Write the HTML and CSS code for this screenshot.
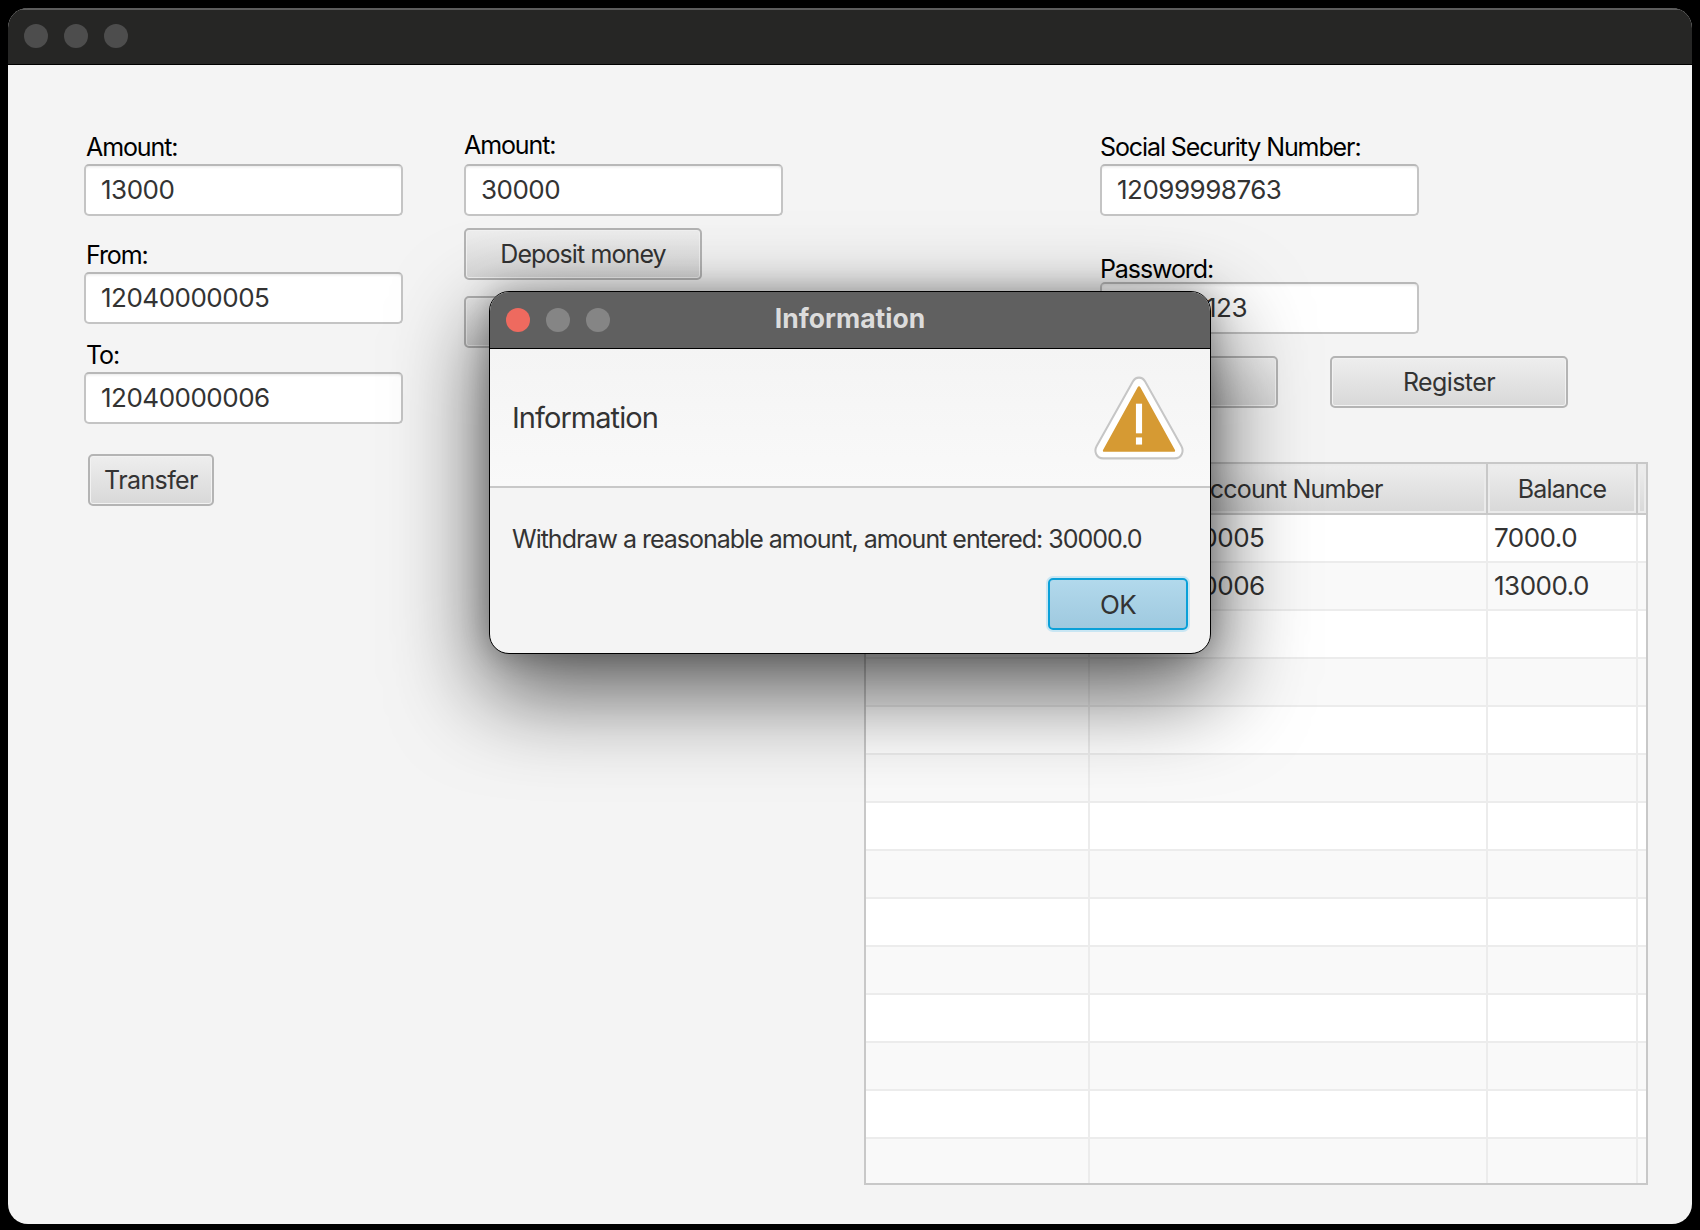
FILE: index.html
```html
<!DOCTYPE html>
<html lang="en">
<head>
    <meta charset="UTF-8">
    <meta name="viewport" content="width=device-width, initial-scale=1.0">
    <title>Bank</title>
    <link rel="stylesheet" href="styles.css">
</head>
<body>

    <div class="window">
        <div class="titlebar">
            <span class="dot"></span>
            <span class="dot"></span>
            <span class="dot"></span>
        </div>

        <div class="content">
            <div class="col col-transfer">
                <div class="label">Amount:</div>
                <div class="field">13000</div>
                <div class="label label-from">From:</div>
                <div class="field">12040000005</div>
                <div class="label label-to">To:</div>
                <div class="field">12040000006</div>
                <button class="button button-transfer">Transfer</button>
            </div>

            <div class="col col-money">
                <div class="label label-raised">Amount:</div>
                <div class="field">30000</div>
                <button class="button button-deposit">Deposit money</button>
                <button class="button button-withdraw"></button>
            </div>

            <div class="col col-account">
                <div class="account-form">
                    <div class="label">Social Security Number:</div>
                    <div class="field">12099998763</div>
                    <div class="label label-password">Password:</div>
                    <div class="field field-password">123</div>
                    <div class="account-buttons">
                        <button class="button button-login"></button>
                        <button class="button button-register">Register</button>
                    </div>
                </div>

                <div class="table-wrap">
                    <table>
                        <thead>
                            <tr>
                                <th class="c-name"></th>
                                <th class="c-number">Account Number</th>
                                <th class="c-balance">Balance</th>
                                <th class="c-filler"></th>
                            </tr>
                        </thead>
                        <tbody id="accountRows">
                            <tr><td></td><td>12040000005</td><td>7000.0</td><td></td></tr>
                            <tr><td></td><td>12040000006</td><td>13000.0</td><td></td></tr>
                            <tr><td></td><td></td><td></td><td></td></tr>
                            <tr><td></td><td></td><td></td><td></td></tr>
                            <tr><td></td><td></td><td></td><td></td></tr>
                            <tr><td></td><td></td><td></td><td></td></tr>
                            <tr><td></td><td></td><td></td><td></td></tr>
                            <tr><td></td><td></td><td></td><td></td></tr>
                            <tr><td></td><td></td><td></td><td></td></tr>
                            <tr><td></td><td></td><td></td><td></td></tr>
                            <tr><td></td><td></td><td></td><td></td></tr>
                            <tr><td></td><td></td><td></td><td></td></tr>
                            <tr><td></td><td></td><td></td><td></td></tr>
                            <tr><td></td><td></td><td></td><td></td></tr>
                        </tbody>
                    </table>
                </div>
            </div>
        </div>
    </div>

    <div class="dialog">
        <div class="dialog-titlebar">
            <span class="dot dot-close"></span>
            <span class="dot"></span>
            <span class="dot"></span>
            <span class="dialog-title">Information</span>
        </div>
        <div class="dialog-header">
            <span class="dialog-heading">Information</span>
            <svg class="warning-icon" width="92" height="86" viewBox="0 0 90 84">
                <path d="M45 2.5c2.6 0 4.6 1.4 6 3.8l35.4 63c3 5.400 0.200 12.200-6.400 12.200H10c-6.600 0-9.400-6.800-6.400-12.200L39 6.300c1.400-2.400 3.400-3.800 6-3.800z" fill="#fff" stroke="#c6c6c6" stroke-width="2"/>
                <path d="M45 11c.6 0 1 .3 1.300 .9l33.900 61.300c.4 .9 0 1.800-1 1.800H10.800c-1 0-1.400-.9-1-1.800l33.900-61.300c.3-.6 .7-.9 1.300-.9z" fill="#d69a33"/>
                <rect x="42" y="28" width="6" height="29" fill="#fff"/>
                <rect x="42" y="61" width="6" height="7" fill="#fff"/>
            </svg>
        </div>
        <div class="dialog-body">
            <p class="dialog-message">Withdraw a reasonable amount, amount entered: 30000.0</p>
            <div class="dialog-actions">
                <button class="button button-ok">OK</button>
            </div>
        </div>
    </div>

</body>
</html>
```

FILE: styles.css
```css
* {
    box-sizing: border-box;
}
body {
    margin: 0;
    width: 1700px;
    height: 1230px;
    background-color: #000;
    font-family: Inter, "Noto Sans", sans-serif;
    font-size: 25px;
    letter-spacing: -0.6px;
    color: #333;
    overflow: hidden;
}
.window {
    position: absolute;
    left: 8px;
    top: 8px;
    width: 1684px;
    height: 1216px;
    background-color: #f4f4f4;
    border-radius: 20px;
    overflow: hidden;
}
.titlebar {
    height: 57px;
    padding: 0 0 2px 16px;
    display: flex;
    align-items: center;
    gap: 16px;
    background-color: #262625;
    border-top: 2px solid #5c5c5c;
    border-bottom: 1px solid #000;
}
.dot {
    width: 24px;
    height: 24px;
    border-radius: 50%;
    background-color: #4d4d4d;
}
.content {
    display: flex;
    padding: 67px 0 0 76px;
}
.col {
    display: flex;
    flex-direction: column;
    align-items: flex-start;
}
.col-transfer {
    width: 380px;
}
.col-money {
    width: 400px;
}
.col-account {
    width: 784px;
}
.label {
    height: 30px;
    margin-bottom: 2px;
    line-height: 30px;
    color: #000;
    white-space: nowrap;
    letter-spacing: -1.1px;
}
.col-transfer .label {
    padding-left: 2px;
}
.label-raised {
    position: relative;
    top: -2px;
}
.label-from {
    margin-top: 24px;
}
.label-to {
    margin-top: 16px;
}
.label-password {
    margin-top: 38px;
    margin-bottom: -2px;
}
.field {
    width: 319px;
    height: 52px;
    padding-left: 15px;
    line-height: 48px;
    background-color: #fff;
    border: 2px solid #c4c4c4;
    border-top-color: #b8b8b8;
    border-radius: 5px;
    box-shadow: inset 0 3px 3px -2px #e8e8e8;
    font-size: 26px;
    letter-spacing: -0.5px;
}
.field-password {
    padding-left: 104px;
}
.button {
    display: block;
    height: 52px;
    padding: 0;
    background: linear-gradient(#eeeeee, #d8d8d8);
    border: 2px solid #b4b4b4;
    border-radius: 5px;
    box-shadow: inset 0 0 0 1px #f2f2f2;
    font-family: inherit;
    font-size: 25px;
    letter-spacing: -0.6px;
    color: #333;
}
.button-transfer {
    width: 126px;
    margin: 30px 0 0 4px;
}
.button-deposit,
.button-withdraw {
    width: 238px;
}
.button-deposit {
    margin-top: 12px;
    letter-spacing: -0.9px;
}
.button-withdraw {
    margin-top: 16px;
}
.account-form {
    padding-left: 236px;
    height: 330px;
}
.account-buttons {
    display: flex;
    gap: 52px;
    margin-top: 22px;
}
.button-login {
    width: 178px;
}
.button-register {
    width: 238px;
}
.table-wrap {
    width: 784px;
    height: 723px;
    background-color: #fff;
    border: 2px solid #c8c8c8;
    overflow: hidden;
}
table {
    width: 780px;
    table-layout: fixed;
    border-collapse: collapse;
}
.c-name {
    width: 223px;
}
.c-number {
    width: 398px;
}
.c-balance {
    width: 150px;
}
th {
    height: 50px;
    padding: 0;
    background: linear-gradient(#eeeeee, #d8d8d8);
    border-right: 2px solid #c8c8c8;
    border-bottom: 2px solid #c8c8c8;
    box-shadow: inset 0 0 0 2px #ebebeb;
    font-weight: 400;
    letter-spacing: -0.8px;
}
th:last-child {
    border-right: none;
}
td {
    height: 48px;
    padding: 0 0 2px 6px;
    border-right: 2px solid #ececec;
    border-bottom: 2px solid #ececec;
    font-size: 26px;
    letter-spacing: -0.5px;
}
td:last-child {
    border-right: none;
}
tbody tr:nth-child(even) {
    background-color: #f9f9f9;
}
.dialog {
    position: absolute;
    left: 489px;
    top: 291px;
    width: 722px;
    height: 363px;
    background-color: #f4f4f4;
    border: 1px solid #000;
    border-radius: 20px;
    box-shadow: 0 34px 90px 6px rgba(0, 0, 0, 0.62), 0 0 30px rgba(0, 0, 0, 0.25);
    overflow: hidden;
}
.dialog-titlebar {
    position: relative;
    height: 57px;
    padding-left: 16px;
    display: flex;
    align-items: center;
    gap: 16px;
    background-color: #606060;
    border-bottom: 1px solid #000;
}
.dialog-titlebar .dot {
    background-color: #858585;
}
.dialog-titlebar .dot-close {
    background-color: #ee6a5f;
}
.dialog-title {
    position: absolute;
    left: 0;
    right: 0;
    padding-bottom: 4px;
    text-align: center;
    font-size: 26.5px;
    font-weight: 700;
    letter-spacing: 0;
    color: #dcdcdc;
}
.dialog-header {
    height: 139px;
    padding: 0 25px 0 22px;
    display: flex;
    align-items: center;
    justify-content: space-between;
    background: linear-gradient(#f4f4f4, #f9f9f9);
    border-bottom: 2px solid #c8c8c8;
}
.dialog-heading {
    font-size: 29px;
    letter-spacing: -0.95px;
}
.warning-icon {
    display: block;
}
.dialog-body {
    padding: 36px 22px 0;
}
.dialog-message {
    margin: 0;
    line-height: 30px;
    white-space: nowrap;
    letter-spacing: -1px;
}
.dialog-actions {
    display: flex;
    justify-content: flex-end;
    margin-top: 24px;
}
.button-ok {
    width: 140px;
    height: 52px;
    background: linear-gradient(#b2d9ec, #9fc9df);
    border: 2px solid #0aa0d8;
    box-shadow: 0 0 0 2px #c9e6f3;
    font-size: 26px;
}
```
